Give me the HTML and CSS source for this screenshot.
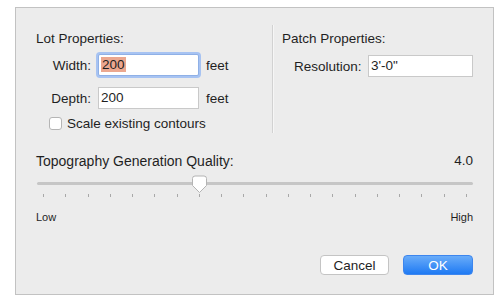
FILE: index.html
```html
<!DOCTYPE html>
<html lang="en">
<head>
    <meta charset="UTF-8">
    <title>Lot Properties</title>
    <link rel="stylesheet" href="styles.css">
</head>
<body>
    <div class="dialog">
        <div class="top">
            <div class="lot">
                <div class="heading">Lot Properties:</div>
                <div class="field-row">
                    <span class="field-label">Width:</span>
                    <div class="input focused"><span class="selected">200</span></div>
                    <span class="unit">feet</span>
                </div>
                <div class="field-row depth">
                    <span class="field-label">Depth:</span>
                    <div class="input">200</div>
                    <span class="unit">feet</span>
                </div>
                <div class="check-row">
                    <span class="checkbox"></span>
                    <span>Scale existing contours</span>
                </div>
            </div>
            <div class="divider"></div>
            <div class="patch">
                <div class="heading">Patch Properties:</div>
                <div class="field-row">
                    <span class="res-label">Resolution:</span>
                    <div class="input res-input">3'-0"</div>
                </div>
            </div>
        </div>

        <div class="quality">
            <div class="quality-head">
                <span class="quality-title">Topography Generation Quality:</span>
                <span>4.0</span>
            </div>
            <div class="slider">
                <div class="track"></div>
                <div class="ticks">
                    <i></i><i></i><i></i><i></i><i></i><i></i><i></i><i></i><i></i><i></i>
                    <i></i><i></i><i></i><i></i><i></i><i></i><i></i><i></i><i></i><i></i>
                </div>
                <svg class="knob" width="17" height="19" viewBox="0 0 17 19">
                    <path d="M1.5 3.5 Q1.5 1 4 1 H13 Q15.5 1 15.5 3.5 V10.5 L8.5 17.5 L1.5 10.5 Z" fill="#ffffff" stroke="#b4b4b4" stroke-width="1"/>
                </svg>
            </div>
            <div class="range-labels">
                <span>Low</span>
                <span>High</span>
            </div>
        </div>

        <div class="buttons">
            <button class="btn cancel">Cancel</button>
            <button class="btn ok">OK</button>
        </div>
    </div>
</body>
</html>
```

FILE: styles.css
```css
* {
    margin: 0;
    padding: 0;
    box-sizing: border-box;
}

body {
    font-family: 'Liberation Sans', Arial, sans-serif;
    font-size: 13.5px;
    color: #1f1f1f;
    background: #ffffff;
}

.dialog {
    margin: 7px 0 0 15px;
    width: 479px;
    height: 288px;
    background: #ececec;
    border: 1px solid #c2c2c2;
    padding: 17px 20px 0 20px;
}

.top {
    display: flex;
    height: 108px;
}

.lot {
    width: 236px;
    padding-top: 6px;
}

.heading {
    line-height: 16px;
    height: 16px;
}

.field-row {
    display: flex;
    align-items: center;
    height: 22px;
    margin-top: 7px;
}

.field-row.depth {
    margin-top: 11px;
}

.field-label {
    width: 55px;
    text-align: right;
}

.input {
    height: 22px;
    background: #ffffff;
    border: 1px solid #c9c9c9;
    padding: 0 2px;
    line-height: 20px;
    margin-left: 7px;
    width: 101px;
}

.input.focused {
    border-color: #8fb0e6;
    box-shadow: 0 0 0 2px #a7c3f2;
    border-radius: 2px;
}

.selected {
    background: #eba78f;
    padding: 0 1px;
}

.unit {
    margin-left: 7px;
}

.check-row {
    display: flex;
    align-items: center;
    height: 16px;
    margin-top: 6px;
    padding-left: 13px;
    gap: 5px;
}

.checkbox {
    width: 13px;
    height: 13px;
    background: #ffffff;
    border: 1px solid #b5b5b5;
    border-radius: 3px;
}

.divider {
    width: 1px;
    background: #d2d2d2;
    box-shadow: 1px 0 0 #f6f6f6;
}

.patch {
    padding: 6px 0 0 9px;
    flex: 1;
}

.patch .field-row {
    margin-top: 8px;
    padding-left: 12px;
}

.res-label {
    width: 66px;
}

.input.res-input {
    margin-left: 8px;
    width: 105px;
}

.quality {
    margin-top: 20px;
}

.quality-head {
    display: flex;
    justify-content: space-between;
    line-height: 16px;
}

.quality-title {
    font-size: 14px;
}

.slider {
    position: relative;
    height: 30px;
}

.track {
    position: absolute;
    left: 1px;
    right: 0;
    top: 13px;
    height: 3px;
    background: #c6c6c6;
    border-radius: 2px;
}

.ticks {
    position: absolute;
    left: 0;
    right: 0;
    top: 25px;
    display: flex;
    justify-content: space-between;
    padding: 0 6px 0 7px;
}

.ticks i {
    width: 1px;
    height: 3px;
    background: #a8a8a8;
}

.knob {
    position: absolute;
    left: 155px;
    top: 6px;
}

.range-labels {
    display: flex;
    justify-content: space-between;
    font-size: 11px;
    line-height: 14px;
    margin-top: 11px;
}

.buttons {
    display: flex;
    justify-content: flex-end;
    gap: 14px;
    margin-top: 31px;
}

.btn {
    font-family: 'Liberation Sans', Arial, sans-serif;
    font-size: 13.5px;
    height: 20px;
    border-radius: 4px;
}

.cancel {
    width: 69px;
    background: #ffffff;
    border: 1px solid #c4c4c4;
    color: #1f1f1f;
}

.ok {
    width: 70px;
    background: linear-gradient(#69acf9, #1f7af3);
    border: 1px solid #3d86ee;
    color: #ffffff;
}
```
